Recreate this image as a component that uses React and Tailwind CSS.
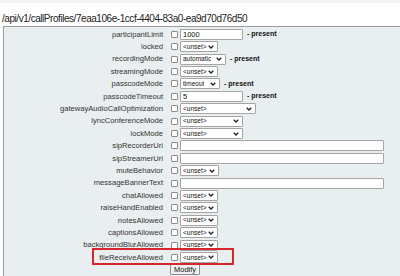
import React from 'react';

const font = { fontFamily: '"Liberation Sans", Arial, sans-serif' };

const rows = [
  { label: 'participantLimit', type: 'input', value: '1000', w: 'w-[63px]', present: true },
  { label: 'locked', type: 'select', value: '<unset>', w: 'w-[38px]' },
  { label: 'recordingMode', type: 'select', value: 'automatic', w: 'w-[46px]', present: true },
  { label: 'streamingMode', type: 'select', value: '<unset>', w: 'w-[38px]' },
  { label: 'passcodeMode', type: 'select', value: 'timeout', w: 'w-[40px]', present: true },
  { label: 'passcodeTimeout', type: 'input', value: '5', w: 'w-[63px]', present: true },
  { label: 'gatewayAudioCallOptimization', type: 'select', value: '<unset>', w: 'w-[76px]' },
  { label: 'lyncConferenceMode', type: 'select', value: '<unset>', w: 'w-[63px]' },
  { label: 'lockMode', type: 'select', value: '<unset>', w: 'w-[63px]' },
  { label: 'sipRecorderUri', type: 'input', value: '', w: 'w-[204px]' },
  { label: 'sipStreamerUri', type: 'input', value: '', w: 'w-[204px]' },
  { label: 'muteBehavior', type: 'select', value: '<unset>', w: 'w-[39px]' },
  { label: 'messageBannerText', type: 'input', value: '', w: 'w-[204px]' },
  { label: 'chatAllowed', type: 'select', value: '<unset>', w: 'w-[38px]' },
  { label: 'raiseHandEnabled', type: 'select', value: '<unset>', w: 'w-[38px]' },
  { label: 'notesAllowed', type: 'select', value: '<unset>', w: 'w-[38px]' },
  { label: 'captionsAllowed', type: 'select', value: '<unset>', w: 'w-[38px]' },
  { label: 'backgroundBlurAllowed', type: 'select', value: '<unset>', w: 'w-[38px]' },
  { label: 'fileReceiveAllowed', type: 'select', value: '<unset>', w: 'w-[38px]', marked: true },
];

const Chevron = () => (
  <svg width="6" height="4" viewBox="0 0 6 4" className="shrink-0">
    <path d="M0.7 0.7 L3 3 L5.3 0.7" fill="none" stroke="#222" strokeWidth="1.3" />
  </svg>
);

const Field = ({ row }) => {
  if (row.type === 'input') {
    return (
      <div className={`${row.w} h-[11px] bg-white border border-[#a4a4a4] rounded-[1px] flex items-center px-[2px] text-[7.5px] text-[#111]`}>
        {row.value}
      </div>
    );
  }
  return (
    <div className={`${row.w} h-[11px] bg-white border border-[#a4a4a4] rounded-[1px] flex items-center justify-between pl-[2px] pr-[3px] text-[6.5px] text-[#111]`}>
      <span className="overflow-hidden whitespace-nowrap">{row.value}</span>
      <Chevron />
    </div>
  );
};

export default function App() {
  return (
    <div className="w-[400px] h-[276px] overflow-hidden bg-white flex flex-col" style={font}>
      <div className="h-[4px] bg-[#f3f3f3]" />
      {/* Resource path */}
      <div className="mt-[9px] h-[14px] leading-[14px] pl-[2px] text-[10px] tracking-[-0.45px] text-[#222] whitespace-nowrap">
        /api/v1/callProfiles/7eaa106e-1ccf-4404-83a0-ea9d70d76d50
      </div>

      {/* Form panel */}
      <div className="ml-[3px] flex-1 bg-[#e9eef0] border-l border-t border-[#9c9c9c] pt-[1px]">
        {rows.map((row) => (
          <div key={row.label} className="relative h-[12.4px] flex items-center">
            <div className="w-[159px] text-right text-[7.6px] text-[#333] whitespace-nowrap">{row.label}</div>
            <div className="ml-[8px] w-[7px] h-[7px] bg-white border border-[#8d8d8d] rounded-[1px]" />
            <div className="ml-[2px]">
              <Field row={row} />
            </div>
            {row.present && <span className="ml-[4px] text-[7px] font-bold text-[#111]">- present</span>}
            {row.marked && (
              <div className="absolute left-[88px] top-[-3px] w-[142px] h-[17px] border-2 border-[#d8242c]" />
            )}
          </div>
        ))}
        <div className="h-[12.4px] flex items-center pl-[166px]">
          <button className="h-[11px] px-[3px] bg-[#f0f0f0] border border-[#8f8f8f] rounded-[1px] text-[7.5px] leading-none text-[#111]">
            Modify
          </button>
        </div>
      </div>
    </div>
  );
}
